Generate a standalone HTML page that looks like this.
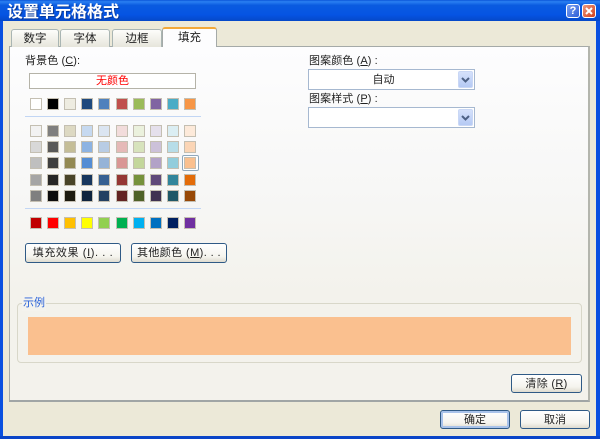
<!DOCTYPE html>
<html><head><meta charset="utf-8"><style>
html,body{margin:0;padding:0;width:600px;height:439px;overflow:hidden;background:#ece9d8}
*{box-sizing:border-box}
body{font-family:"Liberation Sans","Noto Sans CJK SC",sans-serif;font-size:11px;color:#222;position:relative;filter:blur(.35px)}
.a{position:absolute}
.t{position:absolute;white-space:nowrap;line-height:14px;font-size:11px;color:#222;letter-spacing:.1px}
.tab{position:absolute;top:29px;height:18px;border:1px solid #a9b5b3;border-bottom:0;border-radius:3px 3px 0 0;background:linear-gradient(#fdfdfb,#e6e5db);text-align:center;line-height:19px;font-size:11.5px;color:#222}
.s{position:absolute;width:12px;height:12px;border:1px solid #c4bfb2}
.btn{position:absolute;border:1px solid #2f5a86;border-radius:3px;background:linear-gradient(#fff,#f5f4ee 70%,#dedbcf);text-align:center;font-size:11px;color:#222;line-height:19px}
.combo{position:absolute;left:308px;width:167px;height:21px;border:1px solid #a6b8d0;background:#fff}
.arrow{position:absolute;right:1px;top:1px;width:15px;height:17px;background:linear-gradient(#d5e1fb,#b5c9f4);border-radius:2px;border:1px solid #c9d7f5}
u{text-decoration:underline}
</style></head><body>
<div class="a" style="left:0;top:0;width:600px;height:21px;background:linear-gradient(#0a56d8 0,#2a80f2 8%,#0a5be0 25%,#0554e3 70%,#0548c8 100%)"></div>
<div class="a" style="left:0;top:21px;width:3px;height:418px;background:#0a50e0"></div>
<div class="a" style="left:596px;top:21px;width:4px;height:418px;background:#0a50e0"></div>
<div class="a" style="left:0;top:436px;width:600px;height:3px;background:#0a45c8"></div>
<div class="a" style="left:7px;top:3px;font-size:16px;line-height:20px;font-weight:bold;color:#fff;white-space:nowrap;text-shadow:1px 1px 0 #0a3a9a">设置单元格格式</div>
<div class="a" style="left:566px;top:4px;width:14px;height:14px;border:1px solid #fff;border-radius:3px;background:linear-gradient(135deg,#7a9ff0,#2f5fd8);color:#fff;font-weight:bold;font-size:11px;line-height:12px;text-align:center">?</div>
<div class="a" style="left:582px;top:4px;width:14px;height:14px;border:1px solid #fff;border-radius:3px;background:linear-gradient(135deg,#ec9a80,#d2401c)">
<svg width="12" height="12" style="display:block"><path d="M3 3L9 9M9 3L3 9" stroke="#fff" stroke-width="2"/></svg></div>

<div class="a" style="left:9px;top:46px;width:581px;height:356px;border:1px solid #a5aaa8;border-bottom:2px solid #a0a5a5;border-right:2px solid #b3b5ad;background:linear-gradient(#fdfdfe,#f7f7f6 40%,#f3f2ec 70%,#f3f2ec)"></div>
<div class="tab" style="left:11px;width:48px">数字</div>
<div class="tab" style="left:60px;width:50px">字体</div>
<div class="tab" style="left:112px;width:50px">边框</div>
<div class="a" style="left:162px;top:27px;width:55px;height:20px;background:#fdfdfe;border:1px solid #a5aaa8;border-bottom:0;border-top:2px solid #f2a93a;border-radius:3px 3px 0 0;text-align:center;line-height:19px;font-size:11.5px;color:#222">填充</div>

<div class="t" style="left:25px;top:54px">背景色 (<u>C</u>):</div>
<div class="a" style="left:29px;top:73px;width:167px;height:16px;border:1px solid #b5b3a8;background:#fff;color:#f00;text-align:center;line-height:15px;font-size:11px">无颜色</div>

<div class="a" style="left:25px;top:116px;width:176px;height:1px;background:#c2d6f4"></div>
<div class="a" style="left:25px;top:208px;width:176px;height:1px;background:#c2d6f4"></div>

<div id="g">
<div class="s" style="left:30px;top:98px;background:#ffffff"></div><div class="s" style="left:47px;top:98px;background:#000000"></div><div class="s" style="left:64px;top:98px;background:#eeece1"></div><div class="s" style="left:81px;top:98px;background:#1f497d"></div><div class="s" style="left:98px;top:98px;background:#4f81bd"></div><div class="s" style="left:116px;top:98px;background:#c0504d"></div><div class="s" style="left:133px;top:98px;background:#9bbb59"></div><div class="s" style="left:150px;top:98px;background:#8064a2"></div><div class="s" style="left:167px;top:98px;background:#4bacc6"></div><div class="s" style="left:184px;top:98px;background:#f79646"></div>

<div class="s" style="left:30px;top:125px;background:#f2f2f2"></div><div class="s" style="left:47px;top:125px;background:#7f7f7f"></div><div class="s" style="left:64px;top:125px;background:#ddd9c3"></div><div class="s" style="left:81px;top:125px;background:#c6d9f0"></div><div class="s" style="left:98px;top:125px;background:#dbe5f1"></div><div class="s" style="left:116px;top:125px;background:#f2dcdb"></div><div class="s" style="left:133px;top:125px;background:#ebf1dd"></div><div class="s" style="left:150px;top:125px;background:#e5e0ec"></div><div class="s" style="left:167px;top:125px;background:#dbeef3"></div><div class="s" style="left:184px;top:125px;background:#fdeada"></div>

<div class="s" style="left:30px;top:141px;background:#d8d8d8"></div><div class="s" style="left:47px;top:141px;background:#595959"></div><div class="s" style="left:64px;top:141px;background:#c4bd97"></div><div class="s" style="left:81px;top:141px;background:#8db3e2"></div><div class="s" style="left:98px;top:141px;background:#b8cce4"></div><div class="s" style="left:116px;top:141px;background:#e5b9b7"></div><div class="s" style="left:133px;top:141px;background:#d7e3bc"></div><div class="s" style="left:150px;top:141px;background:#ccc1d9"></div><div class="s" style="left:167px;top:141px;background:#b7dde8"></div><div class="s" style="left:184px;top:141px;background:#fbd5b5"></div>

<div class="s" style="left:30px;top:157px;background:#bfbfbf"></div><div class="s" style="left:47px;top:157px;background:#3f3f3f"></div><div class="s" style="left:64px;top:157px;background:#938953"></div><div class="s" style="left:81px;top:157px;background:#548dd4"></div><div class="s" style="left:98px;top:157px;background:#95b3d7"></div><div class="s" style="left:116px;top:157px;background:#d99694"></div><div class="s" style="left:133px;top:157px;background:#c3d69b"></div><div class="s" style="left:150px;top:157px;background:#b2a2c7"></div><div class="s" style="left:167px;top:157px;background:#92cddc"></div>
<div class="a" style="left:182px;top:155px;width:17px;height:16px;border:1px solid #8fa8bd;border-radius:2px;background:#fff"></div>
<div class="s" style="left:184px;top:157px;background:#fac08f"></div>

<div class="s" style="left:30px;top:174px;background:#a5a5a5"></div><div class="s" style="left:47px;top:174px;background:#262626"></div><div class="s" style="left:64px;top:174px;background:#494429"></div><div class="s" style="left:81px;top:174px;background:#17365d"></div><div class="s" style="left:98px;top:174px;background:#366092"></div><div class="s" style="left:116px;top:174px;background:#953734"></div><div class="s" style="left:133px;top:174px;background:#76923c"></div><div class="s" style="left:150px;top:174px;background:#5f497a"></div><div class="s" style="left:167px;top:174px;background:#31859b"></div><div class="s" style="left:184px;top:174px;background:#e36c09"></div>

<div class="s" style="left:30px;top:190px;background:#7f7f7f"></div><div class="s" style="left:47px;top:190px;background:#0c0c0c"></div><div class="s" style="left:64px;top:190px;background:#1d1b10"></div><div class="s" style="left:81px;top:190px;background:#0f243e"></div><div class="s" style="left:98px;top:190px;background:#244061"></div><div class="s" style="left:116px;top:190px;background:#632423"></div><div class="s" style="left:133px;top:190px;background:#4f6128"></div><div class="s" style="left:150px;top:190px;background:#3f3151"></div><div class="s" style="left:167px;top:190px;background:#205867"></div><div class="s" style="left:184px;top:190px;background:#974806"></div>

<div class="s" style="left:30px;top:217px;background:#c00000"></div><div class="s" style="left:47px;top:217px;background:#ff0000"></div><div class="s" style="left:64px;top:217px;background:#ffc000"></div><div class="s" style="left:81px;top:217px;background:#ffff00"></div><div class="s" style="left:98px;top:217px;background:#92d050"></div><div class="s" style="left:116px;top:217px;background:#00b050"></div><div class="s" style="left:133px;top:217px;background:#00b0f0"></div><div class="s" style="left:150px;top:217px;background:#0070c0"></div><div class="s" style="left:167px;top:217px;background:#002060"></div><div class="s" style="left:184px;top:217px;background:#7030a0"></div>
</div>

<div class="btn" style="left:25px;top:243px;width:96px;height:20px;letter-spacing:.6px">填充效果 (<u>I</u>). . .</div>
<div class="btn" style="left:131px;top:243px;width:96px;height:20px;letter-spacing:.4px">其他颜色 (<u>M</u>). . .</div>

<div class="t" style="left:309px;top:54px">图案颜色 (<u>A</u>) :</div>
<div class="combo" style="top:69px;text-align:center;line-height:20px;font-size:11px;color:#222;padding-right:16px">自动<div class="arrow"><svg width="13" height="15" style="display:block"><path d="M3 6L6.5 9.5L10 6" fill="none" stroke="#4d6185" stroke-width="2"/></svg></div></div>
<div class="t" style="left:309px;top:92px">图案样式 (<u>P</u>) :</div>
<div class="combo" style="top:107px"><div class="arrow"><svg width="13" height="15" style="display:block"><path d="M3 6L6.5 9.5L10 6" fill="none" stroke="#4d6185" stroke-width="2"/></svg></div></div>

<div class="a" style="left:17px;top:303px;width:565px;height:60px;border:1px solid #d8d7c9;border-radius:4px"></div>
<div class="a" style="left:22px;top:296px;background:#f4f3ee;padding:0 1px;color:#2a62d8;font-size:11px;line-height:15px">示例</div>
<div class="a" style="left:28px;top:317px;width:543px;height:38px;background:#fac08f"></div>

<div class="btn" style="left:511px;top:374px;width:71px;height:19px;line-height:18px;letter-spacing:.3px">清除 (<u>R</u>)</div>
<div class="btn" style="left:440px;top:410px;width:70px;height:19px;line-height:18px;box-shadow:inset 0 0 0 2px #a9c3ea">确定</div>
<div class="btn" style="left:520px;top:410px;width:70px;height:19px;line-height:18px">取消</div>
</body></html>
